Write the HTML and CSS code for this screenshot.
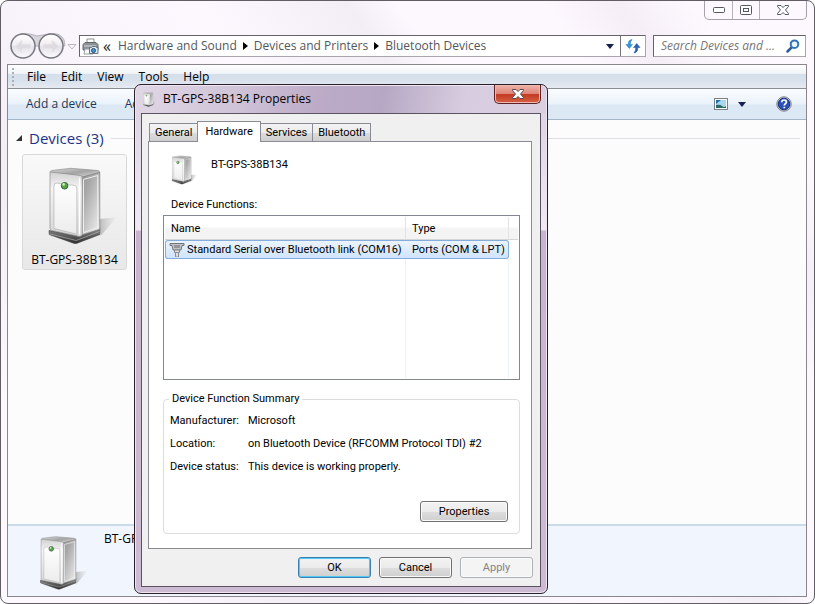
FILE: index.html
```
<!DOCTYPE html>
<html lang="en">
<head>
<meta charset="utf-8">
<title>Bluetooth Devices</title>
<link rel="stylesheet" href="styles.css">
</head>
<body>
<svg class="defs" aria-hidden="true">
  <defs>
    <linearGradient id="g-top" x1="0" y1="0" x2="1" y2="1"><stop offset="0" stop-color="#d8d8d8"/><stop offset=".5" stop-color="#a4a4a4"/><stop offset="1" stop-color="#e2e2e2"/></linearGradient>
    <linearGradient id="g-side" x1="0" y1="0" x2="1" y2="1"><stop offset="0" stop-color="#8e8e8e"/><stop offset=".35" stop-color="#a9a9a9"/><stop offset="1" stop-color="#f4f4f4"/></linearGradient>
    <linearGradient id="g-front" x1="0" y1="0" x2="0" y2="1"><stop offset="0" stop-color="#d2d2d2"/><stop offset=".25" stop-color="#f4f4f4"/><stop offset="1" stop-color="#d6d6d6"/></linearGradient>
    <linearGradient id="g-panel" x1="0" y1="0" x2="0" y2="1"><stop offset="0" stop-color="#ffffff"/><stop offset="1" stop-color="#ececec"/></linearGradient>
    <linearGradient id="g-shadow" x1="0" y1="0" x2="1" y2="0"><stop offset="0" stop-color="#999" stop-opacity=".7"/><stop offset="1" stop-color="#bbb" stop-opacity="0"/></linearGradient>
    <linearGradient id="g-base" x1="0" y1="0" x2="0" y2="1"><stop offset="0" stop-color="#8a8a8a"/><stop offset="1" stop-color="#2c2c2c"/></linearGradient>
    <linearGradient id="g-orb" x1="0" y1="0" x2="0" y2="1"><stop offset="0" stop-color="#ffffff"/><stop offset=".5" stop-color="#f0ecf2"/><stop offset=".52" stop-color="#e4e0e8"/><stop offset="1" stop-color="#fdfbfe"/></linearGradient>
    <symbol id="server" viewBox="140 140 220 240">
      <path d="M292 300 352 293 302 350Z" fill="url(#g-shadow)"/>
      <path d="M146 334 232 350 299 328V346L231 372Q226 374 220 372L147 346Z" fill="url(#g-base)" stroke="#444" stroke-width="2"/>
      <path d="M148 344 228 364 298 337" fill="none" stroke="#b5b5b5" stroke-width="2"/>
      <path d="M149 160Q149 154 155 153L205 147Q212 146 220 147L293 153Q299 154 299 160L246 174Z" fill="url(#g-top)" stroke="#8d8d8d" stroke-width="2"/>
      <path d="M245 173 299 159V330L232 352Z" fill="url(#g-side)" stroke="#777" stroke-width="2"/>
      <path d="M250 180 293 168V325L250 340Z" fill="none" stroke="#eee" stroke-width="3"/>
      <path d="M149 160Q149 157 154 158L240 168Q246 169 246 175V345Q245 352 238 352L156 334Q149 332 149 328Z" fill="url(#g-front)" stroke="#8c8c8c" stroke-width="2"/>
      <path d="M161 200Q161 190 170 191L222 198Q230 199 230 207V345L161 328Z" fill="url(#g-panel)" stroke="#adadad" stroke-width="2"/>
      <path d="M238 175V346" stroke="#fff" stroke-width="4"/>
      <circle cx="193" cy="199" r="10" fill="#58a348" stroke="#3d6440" stroke-width="3"/>
      <circle cx="190" cy="195" r="4" fill="#c6eeb2"/>
    </symbol>
  </defs>
</svg>

<main class="explorer">
  <header class="caption">
    <div class="caption-buttons">
      <button type="button" aria-label="Minimize"><svg width="14" height="8" viewBox="0 0 14 8"><rect x="1.500" y="1.500" width="11" height="5" rx="1" fill="#fff" stroke="#55565f"/></svg></button>
      <button type="button" aria-label="Maximize"><svg width="14" height="12" viewBox="0 0 14 12"><rect x="1.500" y="1.500" width="11" height="9" rx="1" fill="#fff" stroke="#55565f"/><rect x="4.500" y="4.500" width="5" height="3" fill="#fff" stroke="#55565f"/></svg></button>
      <button type="button" class="wide" aria-label="Close"><svg width="14" height="12" viewBox="0 0 14 12"><path d="M1.500 1.500h3.500L7 3.500l2-2h3.500v1L9.500 6l3 3.500v1H9L7 8.500l-2 2H1.500v-1L4.500 6l-3-3.500Z" fill="#fff" stroke="#55565f"/></svg></button>
    </div>
  </header>

  <nav class="navbar">
    <svg class="orbs" width="69" height="28" viewBox="0 0 69 28">
      <path d="M14 1.500Q22 1.500 28 4Q35 3 42 1.500Q52 1 55 8L56 14H3Q3 3 14 1.500Z" fill="#d9d5dc" stroke="#b6b3ba"/>
      <circle cx="14" cy="14" r="12" fill="url(#g-orb)" stroke="#77777f" stroke-width="1.500"/>
      <circle cx="42" cy="14" r="12" fill="url(#g-orb)" stroke="#77777f" stroke-width="1.500"/>
      <path d="M6 14.500 13 8V12H22V17H13V21Z" fill="#dedbe1" stroke="#ece9ee"/>
      <path d="M50 14.500 43 8V12H34V17H43V21Z" fill="#dedbe1" stroke="#ece9ee"/>
      <path d="M59 12.500H67L63 17Z" fill="#fbf6fb" stroke="#bdb8c0"/>
    </svg>
    <div class="address">
      <svg class="printer" width="17" height="17" viewBox="0 0 17 17">
        <path d="M5 1h7v5H5Z" fill="#fff" stroke="#8c9095"/>
        <path d="M1 6.500 3 4.500H14L16 6.500V12H1Z" fill="#8d9298" stroke="#63676c"/>
        <path d="M2 8h12" stroke="#d6d9dc"/>
        <path d="M3 11h8v5H2Z" fill="#f8fbff" stroke="#9a9fa5"/>
        <path d="M7.500 9.500h2l1-1h3l1 1h1.500v6h-8.500Z" fill="#dce6ef" stroke="#66727e"/>
        <circle cx="11.500" cy="12.500" r="2" fill="#4b9bd3" stroke="#1b4b78"/>
      </svg>
      <span class="chev">«</span>
      <a href="#">Hardware and Sound</a><i class="arrow"></i>
      <a href="#">Devices and Printers</a><i class="arrow"></i>
      <a href="#">Bluetooth Devices</a>
      <button type="button" class="history" aria-label="Previous locations"><i class="down"></i></button>
      <button type="button" class="refresh" aria-label="Refresh">
        <svg width="16" height="16" viewBox="0 0 16 16"><path d="M7 1.500Q3 2 3.200 6.500H1L4.300 10.500 7.500 6.500H5.200Q5 4 7 1.500Z" fill="#2f9bdc" stroke="#2673b5" stroke-width=".5"/><path d="M9 15Q13 14.500 12.800 9.500H15L11.700 5.500 8.500 9.500H10.800Q11 12.500 9 15Z" fill="#2c62b4" stroke="#1d4b94" stroke-width=".5"/></svg>
      </button>
    </div>
    <label class="search">
      <input type="text" placeholder="Search Devices and ..." aria-label="Search Devices and Printers">
      <svg width="14" height="14" viewBox="0 0 14 14"><path d="M6 8 1.500 12.500" stroke="#2d5d99" stroke-width="2.500" stroke-linecap="round"/><circle cx="8.500" cy="5.200" r="3.800" fill="#e8f5ff" stroke="#3173b5" stroke-width="2"/></svg>
    </label>
  </nav>

  <section class="client">
    <div class="menubar">
      <i class="grip"></i>
      <button type="button">File</button><button type="button">Edit</button><button type="button">View</button><button type="button">Tools</button><button type="button">Help</button>
    </div>
    <div class="toolbar">
      <button type="button">Add a device</button>
      <button type="button">Add</button>
      <div class="tools">
        <button type="button" aria-label="View"><svg width="14" height="12" viewBox="0 0 14 12"><rect x=".5" y=".5" width="13" height="11" fill="#fff" stroke="#75818d"/><path d="M2 2H12V10H2Z" fill="#a9d6f0"/><path d="M2 2H7L2 6Z" fill="#296fa5"/><path d="M2 7Q6 6 8 8T12 8V10H2Z" fill="#2a6a62"/></svg></button>
        <button type="button" aria-label="More views"><i class="down"></i></button>
        <button type="button" aria-label="Help" class="help"><svg width="16" height="16" viewBox="0 0 16 16"><circle cx="8" cy="8" r="7.200" fill="#d9dbe2" stroke="#787c86"/><circle cx="8" cy="8" r="5.800" fill="#2951b8" stroke="#1a2f7d"/><path d="M5.700 6.200Q5.800 4 8.100 4T10.400 6Q10.400 7 9.300 7.700 8.300 8.300 8.300 9.500M8.300 10.700V12.300" fill="none" stroke="#fff" stroke-width="1.700"/></svg></button>
      </div>
    </div>
    <div class="devices">
      <h1><i class="expander"></i>Devices (3)</h1>
      <figure class="device">
        <svg width="73" height="80"><use href="#server"/></svg>
        <figcaption>BT-GPS-38B134</figcaption>
      </figure>
    </div>
    <footer class="details">
      <svg width="51" height="56"><use href="#server"/></svg>
      <span>BT-GPS-38B134</span>
    </footer>
  </section>
</main>

<section class="dialog" role="dialog" aria-labelledby="dialog-title">
  <header class="titlebar">
    <svg width="14" height="15"><use href="#server"/></svg>
    <h2 id="dialog-title">BT-GPS-38B134 Properties</h2>
    <button type="button" class="close" aria-label="Close"><svg width="14" height="12" viewBox="0 0 14 12"><path d="M1.500 1.500h3.500L7 3.500l2-2h3.500v1L9.500 6l3 3.500v1H9L7 8.500l-2 2H1.500v-1L4.500 6l-3-3.500Z" fill="#fff" stroke="#56494f"/></svg></button>
  </header>
  <div class="body">
    <div class="tabs" role="tablist">
      <button type="button" role="tab">General</button>
      <button type="button" role="tab" class="active" aria-selected="true">Hardware</button>
      <button type="button" role="tab">Services</button>
      <button type="button" role="tab">Bluetooth</button>
    </div>
    <div class="page" role="tabpanel">
      <div class="ident">
        <svg width="28" height="30"><use href="#server"/></svg>
        <span>BT-GPS-38B134</span>
      </div>
      <p class="list-label">Device Functions:</p>
      <div class="list">
        <table>
          <colgroup><col class="c-name"><col class="c-type"><col></colgroup>
          <thead><tr><th>Name</th><th>Type</th><th></th></tr></thead>
          <tbody>
            <tr class="selected">
              <td><span class="name"><svg width="16" height="15" viewBox="0 0 16 15"><path d="M1 1.500h14v2H13L12 8H4L3 3.500H1Z" fill="#c2c5c7" stroke="#71767a"/><path d="M6 3v3M8 3v3M10 3v3" stroke="#65696c"/><path d="M5.500 8h5v2.500h-5Z" fill="#dadcde" stroke="#888"/><path d="M6.500 10.500h3V15h-3Z" fill="#ddd" stroke="#8d9194"/></svg>Standard Serial over Bluetooth link (COM16)</span></td>
              <td>Ports (COM &amp; LPT)</td><td></td>
            </tr>
            <tr class="rest"><td></td><td></td><td></td></tr>
          </tbody>
        </table>
      </div>
      <fieldset>
        <legend>Device Function Summary</legend>
        <dl>
          <dt>Manufacturer:</dt><dd>Microsoft</dd>
          <dt>Location:</dt><dd>on Bluetooth Device (RFCOMM Protocol TDI) #2</dd>
          <dt>Device status:</dt><dd>This device is working properly.</dd>
        </dl>
        <button type="button" class="btn props">Properties</button>
      </fieldset>
    </div>
    <div class="actions">
      <button type="button" class="btn default">OK</button>
      <button type="button" class="btn">Cancel</button>
      <button type="button" class="btn" disabled>Apply</button>
    </div>
  </div>
</section>
</body>
</html>
```
FILE: styles.css
```
* { box-sizing: border-box; }
body {
  margin: 0;
  background: #fff;
  color: #000;
  font: 12px/16px "Open Sans", "Noto Sans", sans-serif;
  overflow: hidden;
}
button { margin: 0; padding: 0; border: 0; background: none; font: inherit; color: inherit; }
svg { display: block; flex: none; }
.defs { position: absolute; width: 0; height: 0; }

/* Explorer window */
.explorer {
  display: flex;
  flex-direction: column;
  height: 100vh;
  padding: 0 7px 6px 6px;
  border: 1px solid #625c65;
  border-radius: 8px;
  background: linear-gradient(55deg, #fdf8fe 0 12%, #f3edf6 24%, #faf5fc 38%, #fdf7fe 50%, #f3edf6 62%, #fdf7fe 66% 78%, #f5eef7 84%, #fdf8fe 90%);
}
.caption { display: flex; justify-content: flex-end; height: 34px; }
.caption-buttons {
  display: flex;
  height: 19px;
  border: 1px solid #a5a0a9;
  border-top: 0;
  border-radius: 0 0 5px 5px;
}
.caption-buttons button { display: grid; place-items: center; width: 27px; }
.caption-buttons button + button { border-left: 1px solid #b5b0b8; }
.caption-buttons .wide { width: 47px; }

.navbar { display: flex; align-items: center; height: 22px; padding-left: 2px; }
.orbs { margin-top: -1px; }
.address, .search {
  display: flex;
  align-items: center;
  height: 22px;
  border: 1px solid #a9a4ad;
  border-top-color: #66626a;
  border-left-color: #66626a;
  background: #fff;
  color: #53565c;
}
.address { flex: 1; min-width: 0; margin-left: 1px; padding-left: 2px; }
.address a { color: inherit; text-decoration: none; white-space: nowrap; }
.chev { margin: 0 7px 0 4px; color: #222; font-size: 16px; }
.arrow { margin: 0 6px; border: 4px solid transparent; border-left: 5px solid #000; border-right: 0; }
.down { display: block; border: 4px solid transparent; border-top: 5px solid #17214f; border-bottom: 0; }
.history { display: grid; place-items: center; width: 20px; height: 20px; margin-left: auto; }
.refresh { display: grid; place-items: center; width: 25px; height: 20px; border-left: 1px solid #77737b; }
.search { width: 153px; margin-left: 7px; margin-right: 1px; padding: 0 5px 0 7px; }
.search input { flex: 1; min-width: 0; padding: 0; border: 0; outline: 0; background: none; font: inherit; font-style: italic; }
.search input::placeholder { color: #77767a; opacity: 1; }

.client {
  display: flex;
  flex: 1;
  flex-direction: column;
  min-height: 0;
  margin-top: 7px;
  border: 1px solid #8b868e;
  background: #fcfcfc;
}
.menubar {
  display: flex;
  align-items: center;
  gap: 15px;
  height: 24px;
  padding-left: 4px;
  border-bottom: 1px solid #898d94;
  background: linear-gradient(#fff, #eef2f7 9px, #d4dfeb 9px, #d9e2ec 16px, #e6eaf1);
}
.grip { width: 2px; height: 18px; margin-right: -2px; background: repeating-linear-gradient(#a9b0ba 0 2px, transparent 2px 4px); }
.toolbar {
  display: flex;
  align-items: center;
  gap: 28px;
  height: 31px;
  padding: 0 14px 0 18px;
  border-bottom: 1px solid #a3b6c8;
  background: linear-gradient(#fbfdff, #eaf2fa 15px, #dce8f4 16px, #dce8f4);
  color: #1e395b;
}
.tools { display: flex; align-items: center; margin-left: auto; gap: 10px; }
.help { margin-left: 20px; }
.devices { flex: 1; padding: 10px 6px 0 8px; }
h1 {
  display: flex;
  align-items: center;
  margin: 0 0 8px;
  font-size: 15px;
  line-height: 16px;
  font-weight: 400;
  color: #1e3287;
}
h1::after { content: ""; flex: 1; height: 1px; margin-left: 7px; background: #dedfe2; }
.expander { margin-right: 7px; border-bottom: 6px solid #333; border-left: 6px solid transparent; }
.device {
  display: flex;
  flex-direction: column;
  align-items: center;
  width: 105px;
  height: 116px;
  margin: 0 0 0 6px;
  padding-top: 11px;
  border: 1px solid #d9d9d9;
  border-radius: 3px;
  background: linear-gradient(#f9f9f9, #e8e8e8);
}
.device svg { margin-left: 18px; }
.device figcaption { margin-top: 6px; }
.details {
  display: flex;
  height: 72px;
  padding: 9px 0 0 31px;
  border-top: 2px solid #ccdbea;
  background: #f1f5fd;
}
.details span { margin: -4px 0 0 14px; }

/* Properties window */
.dialog {
  position: absolute;
  left: 134px;
  top: 84px;
  width: 414px;
  padding: 0 6px 6px;
  border: 1px solid #29202c;
  border-radius: 7px;
  background:
    linear-gradient(100deg, #e0d7e5, #d0c4d8 25%, #bcaac7 45%, #b6a8c4 60%, #d8cde0 80%, #d9cfe0) top / 100% 28px no-repeat,
    linear-gradient(#d9cfe0, #f0e9f2 145px, #c8b4ce 146px, #cdbad3);
  box-shadow: inset 0 0 0 1px #eee5f1;
}
.titlebar { display: flex; align-items: center; height: 28px; padding-left: 2px; }
.titlebar h2 { margin: 0 0 0 6px; font-size: 12px; line-height: 16px; font-weight: 400; }
.close {
  display: grid;
  place-items: center;
  align-self: flex-start;
  width: 47px;
  height: 19px;
  margin-left: auto;
  border: 1px solid #5b2327;
  border-top: 0;
  border-radius: 0 0 5px 5px;
  background: linear-gradient(#f0b3a9, #dd8477 9px, #c23922 9px, #d76144);
  box-shadow: inset 0 0 0 1px #efb9b0;
}
.body {
  padding: 7px 8px 8px 6px;
  border: 1px solid #5b5361;
  background: #f0f0f0;
  font: 11px/14px Roboto, "Liberation Sans", Arial, sans-serif;
}
.tabs { display: flex; align-items: flex-end; padding-left: 1px; height: 20px; }
.tabs button {
  height: 18px;
  padding: 0 5px;
  border: 1px solid #898c95;
  border-bottom: 0;
  background: linear-gradient(#f3f3f3, #ebebeb 9px, #dcdcdc 9px, #cfcfcf);
}
.tabs button + button { margin-left: -1px; }
.tabs .active { z-index: 1; height: 21px; margin-bottom: -1px; padding: 0 7px; background: #fff; }
.page { padding: 13px 11px 14px 14px; border: 1px solid #898c95; background: #fff; }
.ident { display: flex; margin-left: 8px; }
.ident span { margin: 3px 0 0 12px; }
.list-label { margin: 13px 0 3px 8px; }
.list { height: 165px; border: 1px solid #828790; padding: 1px; }
table { width: 100%; height: 100%; border-collapse: separate; border-spacing: 0; table-layout: fixed; }
.c-name { width: 241px; }
.c-type { width: 103px; }
th {
  height: 23px;
  padding: 1px 6px 0;
  border-right: 1px solid #e2e3e5;
  border-bottom: 1px solid #d5d5d5;
  background: linear-gradient(#fff 10px, #f4f4f5 11px);
  font-weight: 400;
  text-align: left;
}
th:last-child { border-right: 0; }
td { padding: 0 2px 0 6px; border-right: 1px solid #edf3fa; white-space: nowrap; }
td:last-child { border-right: 0; }
.selected td { height: 19px; padding-top: 0; }
.selected td:not(:last-child) {
  border: 1px solid #84acdd;
  border-width: 1px 0;
  background: linear-gradient(#ebf4fe, #cfe4fd);
}
.selected td:first-child { padding-left: 3px; border-left-width: 1px; border-radius: 3px 0 0 3px; }
.selected td:nth-child(2) { border-right-width: 1px; border-radius: 0 3px 3px 0; }
.name { display: flex; align-items: center; gap: 2px; }
fieldset {
  display: flex;
  flex-direction: column;
  min-width: 0;
  height: 142px;
  margin: 12px 0 0;
  padding: 8px 11px 11px 6px;
  border: 1px solid #dcdcdc;
  border-radius: 4px;
}
legend { margin-left: -1px; padding: 0 3px; }
dl { display: grid; grid-template-columns: 78px 1fr; row-gap: 9px; margin: 0; }
dd { margin: 0; }
.btn {
  width: 73px;
  height: 21px;
  border: 1px solid #707070;
  border-radius: 3px;
  background: linear-gradient(#f2f2f2, #ebebeb 10px, #dddddd 10px, #cfcfcf);
  box-shadow: inset 0 0 0 1px #fbfbfb;
}
.props { width: 88px; margin: auto 0 0 auto; }
.btn.default { border-color: #3c7fb1; box-shadow: inset 0 0 0 1px #4fc9f5; }
.btn:disabled { border-color: #adb2b5; background: #f4f4f4; color: #838383; }
.actions { display: flex; justify-content: flex-end; gap: 8px; margin: 8px -1px 0 0; }
```
